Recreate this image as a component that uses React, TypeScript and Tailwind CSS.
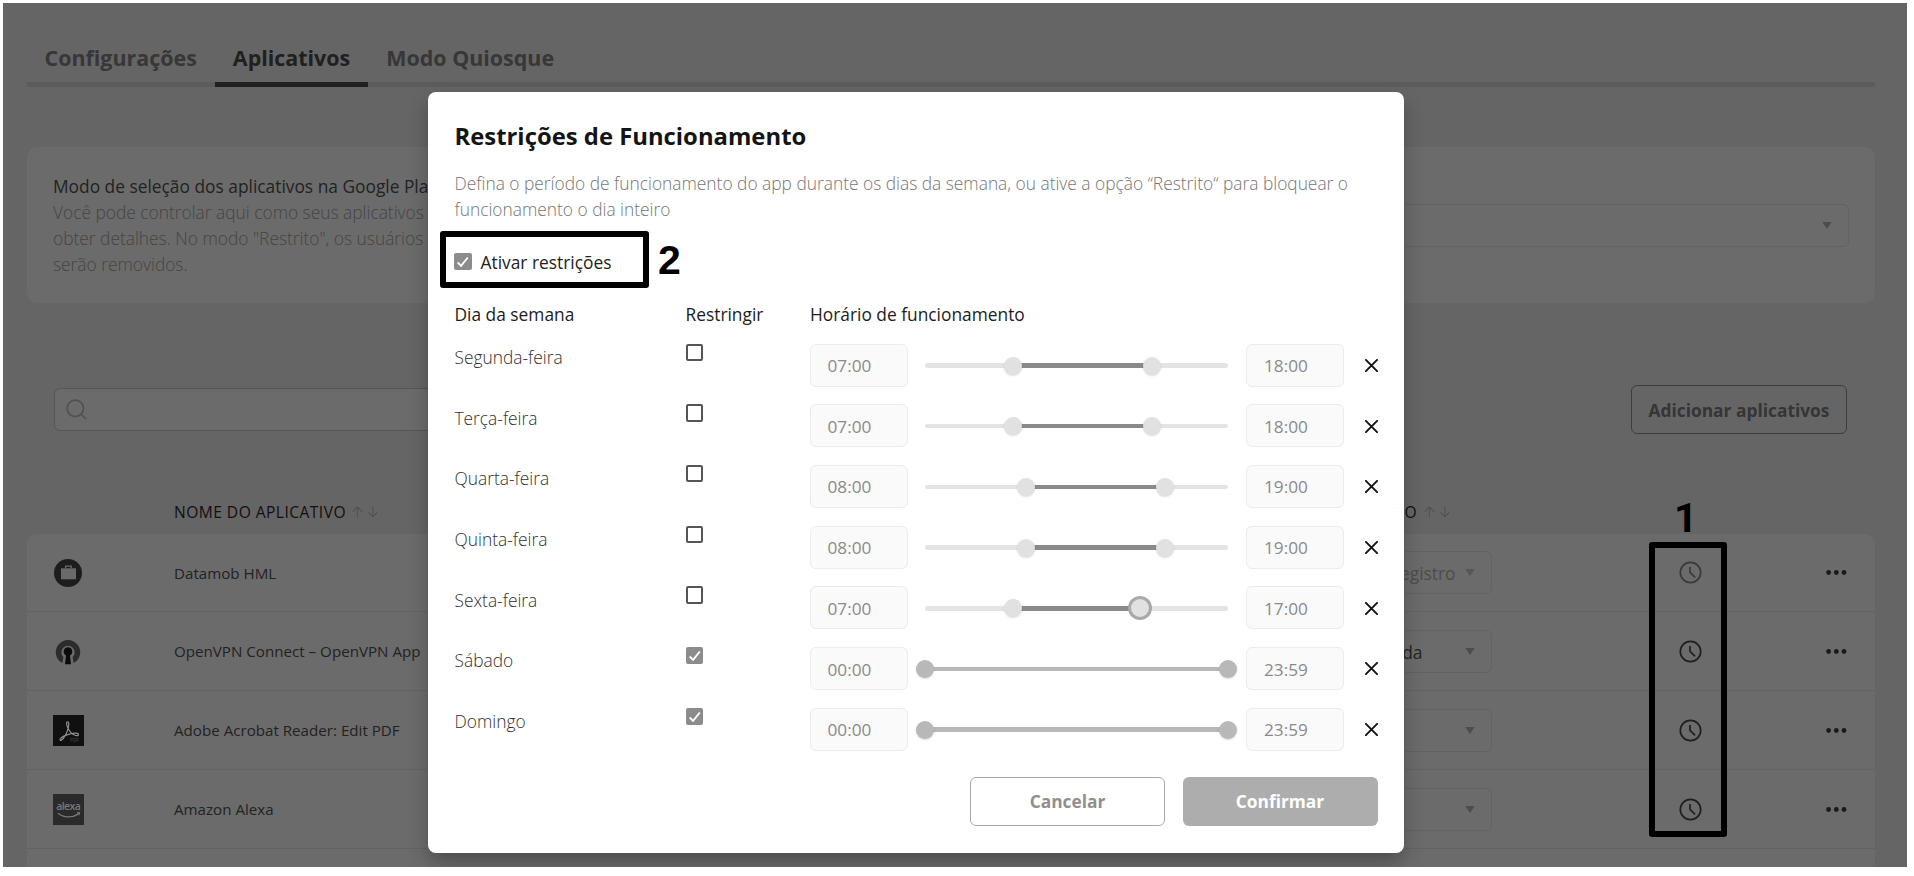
import React from "react";

type Day = { name: string; from: number; to: number; start: string; end: string; restricted?: boolean; active?: boolean };

const days: Day[] = [
  { name: "Segunda-feira", from: 7, to: 18, start: "07:00", end: "18:00" },
  { name: "Terça-feira", from: 7, to: 18, start: "07:00", end: "18:00" },
  { name: "Quarta-feira", from: 8, to: 19, start: "08:00", end: "19:00" },
  { name: "Quinta-feira", from: 8, to: 19, start: "08:00", end: "19:00" },
  { name: "Sexta-feira", from: 7, to: 17, start: "07:00", end: "17:00", active: true },
  { name: "Sábado", from: 0, to: 24, start: "00:00", end: "23:59", restricted: true },
  { name: "Domingo", from: 0, to: 24, start: "00:00", end: "23:59", restricted: true },
];

function Checkbox({ checked }: { checked?: boolean }) {
  if (!checked) {
    return <span className="block size-[17.5px] rounded-[2px] border-2 border-[#555] bg-white" />;
  }
  return (
    <span className="flex size-[17.5px] items-center justify-center rounded-[2px] bg-[#8c8c8c]">
      <svg viewBox="0 0 18 18" className="size-[17.5px]" fill="none" stroke="#fff" strokeWidth="1.9">
        <path d="M3.8 9.8 7.3 13.2 14.2 4.6" />
      </svg>
    </span>
  );
}

function SortArrows() {
  return (
    <svg width="26" height="12" viewBox="0 0 26 12" fill="none" stroke="#525252" strokeWidth="1.1">
      <path d="M5.4 11.2V1M.8 5.6 5.4 1 10 5.6M20.8.6v10.2M16.2 6.2l4.6 4.6 4.6-4.6" />
    </svg>
  );
}

function Caret({ color = "#4d4d4d" }: { color?: string }) {
  return (
    <svg width="10" height="7" viewBox="0 0 10 7">
      <path d="M.3 0h9.4L5 7z" fill={color} />
    </svg>
  );
}

function Clock({ color }: { color: string }) {
  return (
    <svg width="23" height="23" viewBox="0 0 23 23" fill="none" stroke={color} strokeWidth="1.7">
      <circle cx="11.5" cy="11.5" r="10.2" />
      <path d="M11 6v5.4l5.1 4.9" />
    </svg>
  );
}

function Dots() {
  return (
    <svg width="21" height="5" viewBox="0 0 21 5" fill="#1a1a1a">
      <circle cx="2.6" cy="2.5" r="2.4" />
      <circle cx="10.3" cy="2.5" r="2.4" />
      <circle cx="18" cy="2.5" r="2.4" />
    </svg>
  );
}

const briefcase = (
  <svg width="28" height="28" viewBox="0 0 28 28">
    <circle cx="14" cy="14" r="14" fill="#1d1d1d" />
    <path d="M7 9.3h15v11H7z" fill="#6a6a6a" />
    <path d="M11.6 9.3V7.1h5.6v2.2" fill="none" stroke="#6a6a6a" strokeWidth="1.3" />
  </svg>
);

const openvpn = (
  <svg width="28" height="28" viewBox="0 0 28 28">
    <path d="M8.3 25A12.2 12.2 0 1 1 19.7 25L18.6 19.2A6.6 6.6 0 1 0 9.4 19.2Z" fill="#2b2b2b" />
    <circle cx="14" cy="13.6" r="4.3" fill="#0b0b0b" />
    <path d="M12.2 16h3.6l1.2 10.2h-6z" fill="#0b0b0b" />
  </svg>
);

const acrobat = (
  <svg width="31" height="31" viewBox="0 0 31 31">
    <rect width="31" height="31" fill="#101010" />
    <path
      d="M14.8 6.800c-1.900-.3-1.400 3.200.2 6.500 1.900 3.700 4.600 6.500 7.500 7.200 2.200.5 3.400-.3 2.900-1.400-.6-1.100-4.200-1.200-8.300-.2-4.100 1-7.900 2.900-9.600 4.700-1 1.200-.2 2.100 1 1.500 2.700-1.400 6-8.400 6.900-12.800.6-3 .6-5.300-.6-5.500z"
      fill="none"
      stroke="#8e8e8e"
      strokeWidth="1.200"
    />
    <text x="17" y="27.3" fontSize="4.8" fill="#4a4a4a" className="font-['Open_Sans',sans-serif]">PDF</text>
  </svg>
);

const alexa = (
  <svg width="31" height="31" viewBox="0 0 31 31">
    <rect width="31" height="31" fill="#2a2a2a" />
    <text x="3.2" y="16" fontSize="10.5" textLength="24.6" fill="#787878" className="font-['Open_Sans',sans-serif] font-semibold">alexa</text>
    <path d="M5 19.3c5.5 4.6 14.5 4.7 20 .8M24 18.8l2.500-.2-.6 2.600" fill="none" stroke="#787878" strokeWidth="1.3" />
  </svg>
);

const apps = [
  { icon: briefcase, name: "Datamob HML", value: "Sem registro", muted: true },
  { icon: openvpn, name: "OpenVPN Connect – OpenVPN App", value: "Permitida" },
  { icon: acrobat, name: "Adobe Acrobat Reader: Edit PDF", value: "" },
  { icon: alexa, name: "Amazon Alexa", value: "" },
];

function AppRow({ icon, name, value, muted }: { icon: React.ReactNode; name: string; value: string; muted?: boolean }) {
  return (
    <div className="grid h-[78.8px] grid-cols-[147px_1137.5px_180px_1fr_59px] items-center border-b border-[#636363] pt-px">
      <div className="ml-[25px] flex w-8 justify-center">{icon}</div>
      <div className="text-[15.15px] text-[#222]">{name}</div>
      <div className={`flex h-[43px] items-center justify-end gap-[9px] rounded-md border border-[#626262] pr-[16px] text-[17.35px] ${muted ? "text-[#4c4c4c]" : "text-[#242424]"}`}>
        <span className={`whitespace-nowrap ${muted ? "" : "mr-[33px]"}`}>{value}</span>
        <Caret color={muted ? "#565656" : "#4d4d4d"} />
      </div>
      <div className="pl-[187px]"><Clock color={muted ? "#3a3a3a" : "#1f1f1f"} /></div>
      <div className="pl-[10px]"><Dots /></div>
    </div>
  );
}

function TimeInput({ value }: { value: string }) {
  return (
    <div className="flex h-[43px] w-[98px] items-center rounded-[6px] border border-[#ececec] bg-[#fafafa] pt-[2px] pl-[17px] text-[17.2px] text-[#8a8a8a]">
      {value}
    </div>
  );
}

function Slider({ day }: { day: Day }) {
  const left = (day.from / 24) * 100;
  const right = (day.to / 24) * 100;
  const thumb = day.restricted ? "bg-[#b8b8b8]" : "bg-[#e1e1e1]";
  return (
    <div className="relative h-[4.5px] w-[303px] rounded-full bg-[#e4e4e4]">
      <div
        className={`absolute inset-y-0 ${day.restricted ? "bg-[#b8b8b8]" : "bg-[#8a8a8a]"}`}
        style={{ left: `${left}%`, width: `${right - left}%` }}
      />
      <div
        className={`absolute top-1/2 size-[18px] -translate-1/2 rounded-full shadow-[0_1px_2px_rgba(0,0,0,0.15)] ${thumb}`}
        style={{ left: `${left}%` }}
      />
      <div
        className={`absolute top-1/2 size-[18px] -translate-1/2 rounded-full ${thumb} ${day.active ? "shadow-[0_0_0_3px_#a9a9a9]" : "shadow-[0_1px_2px_rgba(0,0,0,0.15)]"}`}
        style={{ left: `${right}%` }}
      />
    </div>
  );
}

function DayRow({ day }: { day: Day }) {
  return (
    <div className="grid h-[60.7px] grid-cols-[231px_124px_115.5px_321px_118.5px_1fr] items-start">
      <div className="pt-[0.5px] text-[17.35px] leading-[26px] font-light text-[#303030]">{day.name}</div>
      <div><Checkbox checked={day.restricted} /></div>
      <TimeInput value={day.start} />
      <div className="flex h-[43px] items-center pt-px"><Slider day={day} /></div>
      <TimeInput value={day.end} />
      <div className="flex h-[43px] items-center pt-px">
        <svg width="13" height="13" viewBox="0 0 13 13" stroke="#111" strokeWidth="1.9" strokeLinecap="round">
          <path d="M.9.9l11.2 11.2M12.1.9.9 12.1" />
        </svg>
      </div>
    </div>
  );
}

function Modal() {
  return (
    <div className="absolute top-[89px] left-[425px] flex h-[760.5px] w-[975.5px] flex-col rounded-[8px] bg-white pt-[27.5px] pr-[26px] pl-[26.5px] shadow-[0_11px_15px_-7px_rgba(0,0,0,0.2),0_9px_20px_3px_rgba(0,0,0,0.14)]">
      <h2 className="h-8 text-[23.85px] leading-8 font-bold text-[#141414]">Restrições de Funcionamento</h2>
      <div className="mt-[18.5px] h-[52px] text-[17.35px] leading-[26px] font-light whitespace-nowrap text-[#757575]">
        <p>Defina o período de funcionamento do app durante os dias da semana, ou ative a opção “Restrito“ para bloquear o</p>
        <p>funcionamento o dia inteiro</p>
      </div>
      <div className="mt-[26.5px] -ml-[0.5px] flex h-[26px] items-center gap-[9px] text-[17.35px] text-[#222]">
        <Checkbox checked />
        <span>Ativar restrições</span>
      </div>
      <div className="mt-[26px] grid h-[26px] grid-cols-[231px_124.5px_1fr] text-[17.35px] leading-[26px] text-[#1c1c1c]">
        <span>Dia da semana</span>
        <span>Restringir</span>
        <span>Horário de funcionamento</span>
      </div>
      <div className="mt-[17px]">
        {days.map((d) => <DayRow key={d.name} day={d} />)}
      </div>
      <div className="mt-[8.5px] flex justify-end gap-[17.5px] text-[17.35px] font-bold">
        <button className="h-[49px] w-[195px] rounded-[6px] border border-[#a8a8a8] text-[#8f8f8f]">Cancelar</button>
        <button className="h-[49px] w-[195px] rounded-[6px] bg-[#adadad] text-white">Confirmar</button>
      </div>
    </div>
  );
}

export default function App() {
  return (
    <div className="relative h-[876px] w-[1914px] overflow-hidden bg-white pt-[3px] pl-[3px] font-['Open_Sans',sans-serif]">
      <div className="relative h-[863.5px] w-[1904px] overflow-hidden bg-[#656565] pr-[32.5px] pl-[24px]">
        <nav className="flex h-[84px] items-end border-b-[5px] border-[#5c5c5c] text-[21.45px] font-bold text-[#373737]">
          <span className="-mb-[5px] pr-[18px] pl-[17.5px] pb-[14.5px] leading-[30px]">Configurações</span>
          <span className="-mb-[5px] border-b-[5px] border-[#202020] px-[18px] pb-[9.5px] leading-[30px] text-[#202020]">Aplicativos</span>
          <span className="-mb-[5px] px-[18px] pb-[14.5px] leading-[30px]">Modo Quiosque</span>
        </nav>

        <section className="mt-[60px] flex h-[156px] items-center justify-between rounded-[10px] bg-[#6b6b6b] pr-[25.5px] pl-[26px]">
          <div className="text-[17.35px] leading-[26px] whitespace-nowrap text-[#444]">
            <p className="text-[#222]">Modo de seleção dos aplicativos na Google Play</p>
            <div className="font-light">
              <p>Você pode controlar aqui como seus aplicativos</p>
              <p>obter detalhes. No modo "Restrito", os usuários a</p>
              <p>serão removidos.</p>
            </div>
          </div>
          <div className="flex h-[43px] w-[900px] items-center justify-end rounded-md border border-[#626262] pr-[16px]"><Caret /></div>
        </section>

        <div className="mt-[81.5px] flex h-[50px] items-center justify-between pr-[27.5px] pl-[27px]">
          <div className="flex h-[43px] w-[500px] items-center rounded-md border border-[#565656] bg-[#6b6b6b] pl-[11px]">
            <svg width="21" height="21" viewBox="0 0 21 21" fill="none" stroke="#505050" strokeWidth="1.6">
              <circle cx="9.3" cy="9.3" r="8.2" />
              <path d="m15 15 5 5" />
            </svg>
          </div>
          <button className="h-[49px] w-[216px] rounded-[6px] border border-[#3d3d3d] pt-px text-[17.35px] font-bold text-[#353535]">Adicionar aplicativos</button>
        </div>

        <div className="mt-[65px] flex h-[34px] text-[15.6px] leading-[24px] font-medium tracking-[0.45px] text-[#101010]">
          <div className="flex w-[1204px] items-center gap-[6px] pb-[10px] pl-[147px]">NOME DO APLICATIVO <SortArrows /></div>
          <div className="flex w-[219px] items-center justify-end gap-[7px] pb-[10px]">INSTALAÇÃO <SortArrows /></div>
        </div>

        <section className="rounded-t-[10px] bg-[#6b6b6b]">
          {apps.map((a) => <AppRow key={a.name} {...a} />)}
          <AppRow icon={null} name="" value="" />
        </section>

        <Modal />
      </div>

      <div className="absolute top-[231px] left-[440px] h-[57px] w-[209px] rounded-[3px] border-[6px] border-black" />
      <div className="absolute top-[237px] left-[658px] font-['Liberation_Sans',sans-serif] text-[41px] leading-[47px] font-bold text-black">2</div>
      <div className="absolute top-[541.5px] left-[1648.5px] h-[295.5px] w-[78px] rounded-[3px] border-[6px] border-black" />
      <div className="absolute top-[495px] left-[1674px] font-['Roboto',sans-serif] text-[41px] leading-[47px] font-bold text-black">1</div>
    </div>
  );
}
